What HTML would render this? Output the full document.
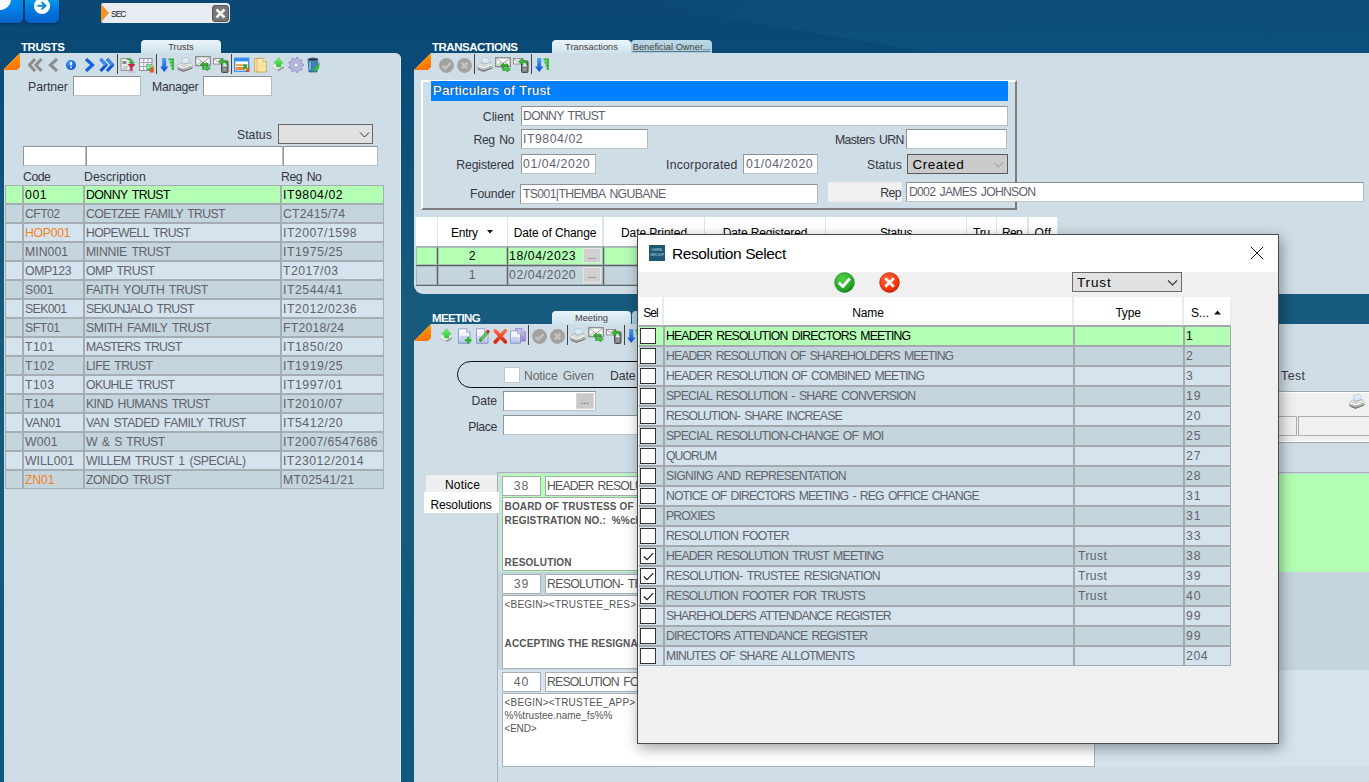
<!DOCTYPE html>
<html><head><meta charset="utf-8"><title>SEC</title>
<style>
*{box-sizing:border-box;margin:0;padding:0}
html,body{width:1369px;height:782px;overflow:hidden}
body{background:linear-gradient(to bottom,#0a4775 0,#0a4a76 55px,#11537a 190px,#165a7d 300px,#165a7c 540px,#0f587c 620px,#0e597d 782px);font-family:"Liberation Sans",sans-serif;font-size:12px;color:#3a3a3a;position:relative}
.a{position:absolute}
.lbl{position:absolute;white-space:nowrap;font-size:12px;color:#36363f;line-height:14px}
.r{text-align:right}
.inp{position:absolute;background:#fff;border:1px solid;border-color:#8b9196 #b4bbc0 #bcc3c8 #90969b;font-size:12px;color:#62626e;line-height:17px;padding-left:2px;white-space:nowrap;overflow:hidden}
.hdr{position:absolute;color:#fdfdfd;font-weight:bold;font-size:11.5px;line-height:12px;white-space:nowrap}
.tab{position:absolute;font-size:9.3px;color:#4a4038;text-align:center;line-height:13px;border-radius:4px 4px 0 0;background:linear-gradient(#e9f5fa,#cfe4ee);white-space:nowrap;overflow:hidden}
.tri{position:absolute;width:17px;height:17px;background:linear-gradient(160deg,#ffa800,#ff6a00);clip-path:polygon(100% 0,100% 82%,82% 100%,0 100%)}
.c{position:absolute;white-space:nowrap;overflow:hidden;font-size:12px;line-height:19px;padding-left:1px;color:#62626a}
.e{background:#c5d5de}.o{background:#d4e3ee}.s{background:#b3ffb3;color:#000}
.or{color:#f58220}
.sep{position:absolute;width:1px;background:#444}
.ic{position:absolute}
.btn{position:absolute;background:#d9d9d9;border:1px solid #b0b0b0;font-size:10px;color:#555;text-align:center;line-height:12px}
.cb{position:absolute;width:16px;height:16px;background:#fff;border:1px solid #333}
</style></head><body>
<!-- topbar -->
<div class="a" style="left:620px;top:0px;width:749px;height:53px;background:linear-gradient(to right,rgba(30,110,160,0),rgba(30,110,160,.16) 25%,rgba(30,110,160,.16));clip-path:polygon(0 0,100% 0,100% 100%,42% 100%)"></div>
<div class="a" style="left:-10px;top:-10px;width:33px;height:32.5px;border-radius:5px;background:linear-gradient(#0a96f0,#0082ea 55%,#0a62c6);box-shadow:0 1px 3px rgba(0,20,60,.45)"></div>
<div class="a" style="left:-10.7px;top:-11.7px;width:21.4px;height:21.4px;border-radius:50%;background:#fcfcfc"></div>
<div class="a" style="left:25px;top:-10px;width:34.3px;height:32.5px;border-radius:5px;background:linear-gradient(#00aee2,#0392e2 35%,#0078e0 60%,#0660c8);box-shadow:0 1px 3px rgba(0,20,60,.45)"></div>
<svg class="a" style="left:33px;top:-3.300px" width="18" height="18" viewBox="0 0 18 18"><circle cx="9" cy="9" r="8.050" fill="#fbfbfb"/><path d="M5.300 8.700h7M9.200 5.600l3.300 3.100-3.300 3.100" stroke="#0a86d2" stroke-width="1.900" fill="none" stroke-linecap="round" stroke-linejoin="round"/></svg>
<div class="a" style="left:101px;top:3px;width:129px;height:20px;background:#e6ecf2;border-radius:2px 4px 4px 2px"></div>
<svg class="a" style="left:101px;top:4px" width="8" height="18" viewBox="0 0 8 18"><path d="M0 0L8 9 0 18z" fill="#f7941d"/></svg>
<div class="a" style="left:111px;top:7px;line-height:12px;color:#222;white-space:nowrap"><span style="font-size:8.5px;letter-spacing:-1.003px;">SEC</span></div>
<svg class="a" style="left:212px;top:5px" width="17" height="17" viewBox="0 0 17 17"><rect x=".5" y=".5" width="16" height="16" rx="2.500" fill="#777" stroke="#555"/><path d="M4.500 4.500l8 8M12.500 4.500l-8 8" stroke="#f2f2f2" stroke-width="2.600"/></svg>
<!-- left panel -->
<div class="a" style="left:4px;top:53px;width:397px;height:740px;background:#cfdde6;border-radius:0 6px 0 0;box-shadow:inset -1px 0 0 #dde8ee"></div>
<svg width="0" height="0" style="position:absolute"><defs>
<linearGradient id="gBlue" x1="0" y1="0" x2="0" y2="1"><stop offset="0" stop-color="#4aa0ff"/><stop offset="1" stop-color="#0a4fd0"/></linearGradient>
<linearGradient id="gGreen" x1="0" y1="0" x2="0" y2="1"><stop offset="0" stop-color="#7be04a"/><stop offset="1" stop-color="#1f9a1f"/></linearGradient>
<radialGradient id="gOk" cx=".4" cy=".3" r=".8"><stop offset="0" stop-color="#58d048"/><stop offset=".7" stop-color="#22a428"/><stop offset="1" stop-color="#0b7a16"/></radialGradient>
<radialGradient id="gNo" cx=".4" cy=".3" r=".8"><stop offset="0" stop-color="#ff6238"/><stop offset=".7" stop-color="#f03408"/><stop offset="1" stop-color="#c01402"/></radialGradient>
<radialGradient id="gInfo" cx=".4" cy=".3" r=".8"><stop offset="0" stop-color="#4a9cff"/><stop offset="1" stop-color="#0746c4"/></radialGradient>
<linearGradient id="gGray" x1="0" y1="0" x2="0" y2="1"><stop offset="0" stop-color="#f4f4f4"/><stop offset="1" stop-color="#b8b8b8"/></linearGradient>
<linearGradient id="gPage" x1="0" y1="0" x2="0" y2="1"><stop offset="0" stop-color="#ffffff"/><stop offset=".45" stop-color="#eef1fb"/><stop offset="1" stop-color="#aebbe4"/></linearGradient>
<linearGradient id="gPurp" x1="0" y1="0" x2="0" y2="1"><stop offset="0" stop-color="#d4caee"/><stop offset="1" stop-color="#9686cf"/></linearGradient>
<linearGradient id="gRed" x1="0" y1="0" x2="0" y2="1"><stop offset="0" stop-color="#ff6a45"/><stop offset="1" stop-color="#d8240c"/></linearGradient>
<linearGradient id="gGreen2" x1="0" y1="0" x2="0" y2="1"><stop offset="0" stop-color="#7cf56c"/><stop offset="1" stop-color="#2fc030"/></linearGradient>
<linearGradient id="gPrn" x1="0" y1="0" x2="0" y2="1"><stop offset="0" stop-color="#f2f2f2"/><stop offset="1" stop-color="#9c9c9c"/></linearGradient>
</defs></svg>
<div class="a" style="left:3px;top:53px;width:17px;height:17px;background:#0a4a76;clip-path:polygon(0 0,100% 0,0 100%)"></div>
<div class="tri" style="left:3px;top:53px"></div>
<svg class="a" style="left:28px;top:58px" width="15" height="14" viewBox="0 0 15 14"><path d="M7 1L1.5 7 7 13M13.5 1L8 7l5.5 6" stroke="#8e8e8e" stroke-width="3.1" fill="none"/></svg>
<svg class="a" style="left:48px;top:58px" width="11" height="14" viewBox="0 0 11 14"><path d="M9 1L2.5 7 9 13" stroke="#8e8e8e" stroke-width="3.2" fill="none"/></svg>
<svg class="a" style="left:66px;top:60px" width="10" height="10" viewBox="0 0 10 10"><circle cx="5" cy="5" r="5" fill="url(#gInfo)"/><rect x="4.200" y="1.800" width="1.800" height="3.800" rx=".8" fill="#fff"/><rect x="4.200" y="6.400" width="1.800" height="1.800" rx=".8" fill="#fff"/></svg>
<svg class="a" style="left:84px;top:58px" width="11" height="14" viewBox="0 0 11 14"><path d="M2 1l6.5 6L2 13" stroke="#1762e0" stroke-width="3.2" fill="none"/></svg>
<svg class="a" style="left:99px;top:58px" width="15" height="14" viewBox="0 0 15 14"><path d="M1.5 1L7 7l-5.500 6M8 1l5.500 6L8 13" stroke="#0f55d8" stroke-width="3.100" fill="none"/><path d="M1.500 1L7 7M8 1l5.500 6" stroke="#3d8cf2" stroke-width="3.100" fill="none"/></svg>
<div class="sep" style="left:117px;top:54px;height:20px"></div>
<svg class="a" style="left:120px;top:57px" width="16" height="16" viewBox="0 0 16 16"><rect x="1" y="1.500" width="9" height="12" fill="#e9e9e9" stroke="#9a9a9a"/><rect x="2.500" y="4" width="4" height="3" fill="#8a8a8a"/><path d="M3 10h5M3 12h4" stroke="#aaa"/><path d="M7 1.500c4-.5 6 1 6 3.500h2l-3.200 3.500L8.600 5h2c0-1.500-1.200-2.300-3.600-2z" fill="#2fae2f"/><path d="M7.500 7h8l-3 3.500v3.500h-2v-3.500z" fill="#d4204a"/><path d="M8.500 15h6" stroke="#b9b9b9"/></svg>
<svg class="a" style="left:139px;top:57px" width="15" height="16" viewBox="0 0 15 16"><rect x=".5" y="1.500" width="12.500" height="12" fill="#f3f1fb" stroke="#8f8f9a"/><path d="M.5 5.500h12.500M.5 9.500h12.500M4.700 1.500v12M8.900 1.500v12" stroke="#a8a6b8"/><rect x="7.500" y="7" width="5.500" height="6" fill="#3aa83a"/><path d="M9 12V8h2.200a1.200 1.200 0 010 2.400H9" stroke="#dff5df" stroke-width="1" fill="none"/><path d="M14.800 8.500L10 15.500h4.800z" fill="#ee5a24"/></svg>
<div class="sep" style="left:156px;top:54px;height:20px"></div>
<svg class="a" style="left:160px;top:57px" width="15" height="16" viewBox="0 0 15 16"><path d="M2.200 1h4v8.500h2.300L4.200 15 0 9.500h2.200z" fill="url(#gBlue)"/><path d="M8.500 2.500h5.500M9.500 5.500h4.500M10.500 8.500h3.500M11.500 11.500h2.500" stroke="#2fb52f" stroke-width="2"/><path d="M13 2v11" stroke="#2fb52f" stroke-width="1.400"/></svg>
<svg class="a" style="left:177px;top:57px" width="16" height="16" viewBox="0 0 16 16"><path d="M4.300 1.200l6.200-.9 2.700 5.200-7 1.600z" fill="#d9ebfb" stroke="#a9bdd0" stroke-width=".6"/><path d="M.7 8.300l3.200-2.600 2.300 1.500 6.500-1.500 2.600 2v3.400l-8.800 3.300-5.800-2.300z" fill="url(#gPrn)" stroke="#8f8f8f" stroke-width=".5"/><path d="M.7 8.400l5.800 2.300 8.800-3" stroke="#fdfdfd" stroke-width="1.100" fill="none"/><path d="M.9 12l5.600 2.300 8.700-3.300" stroke="#6e6e6e" stroke-width="1" fill="none"/><circle cx="13" cy="9.600" r=".8" fill="#35c435"/></svg>
<svg class="a" style="left:195px;top:56px" width="16" height="16" viewBox="0 0 16 16"><rect x=".7" y=".7" width="14.600" height="9" fill="#f4f4f4" stroke="#858585" stroke-width="1.200"/><path d="M1 1l7 5.500L15 1M1 9.500l5-4M15 9.500l-5-4" stroke="#a2a2a2" stroke-width=".9" fill="none"/><path d="M8.500 6v1.500h4.500v2.200H8.500v1.500L5 8.600z" fill="#30b030" stroke="#1a7a1a" stroke-width=".5"/><path d="M12 9.700v1.500H7.500v2.200H12v1.500l3.500-2.600z" fill="#45cc45" stroke="#1a7a1a" stroke-width=".5"/></svg>
<svg class="a" style="left:213px;top:57px" width="16" height="16" viewBox="0 0 16 16"><rect x=".5" y="1.500" width="8" height="5.500" fill="#f6f6f6" stroke="#8a8a8a" stroke-width=".9"/><path d="M.7 1.700l3.800 3 3.800-3" stroke="#8a8a8a" stroke-width=".8" fill="none"/><rect x="8.500" y="4" width="6.500" height="11.500" rx="1" fill="#7c7c7c" stroke="#4a4a4a"/><rect x="9.700" y="5" width="4.200" height="4.500" fill="#cfe8e8"/><rect x="10.200" y="10.800" width="3.200" height="3.200" fill="#9a9a9a"/><path d="M5.500 5l4.500-4v2.200c3 0 4.300 1.800 4 5-1-2-2-2.600-4-2.600V8z" fill="#35b535" stroke="#1c7a1c" stroke-width=".4"/></svg>
<div class="sep" style="left:231px;top:54px;height:20px"></div>
<svg class="a" style="left:234px;top:57px" width="16" height="16" viewBox="0 0 16 16"><rect x=".7" y="1.200" width="14" height="13" fill="#fff" stroke="#2f8cf0" stroke-width="1.300"/><rect x=".7" y="1.200" width="14" height="3.200" fill="#2f8cf0"/><rect x="2" y="7" width="8" height="2" fill="#f4a64a"/><rect x="2" y="10" width="9" height="3" fill="#f08a2a"/><rect x="9.300" y="7.200" width="4" height="5" fill="#3aa83a"/><path d="M15.300 9L11 14.800h4.300z" fill="#ee4a24"/></svg>
<svg class="a" style="left:254px;top:57px" width="13" height="16" viewBox="0 0 13 16"><path d="M.7 1.500h8.500l3 3V15H.7z" fill="#fdf0b2" stroke="#c9a94a"/><path d="M9.200 1.500v3h3" fill="#fff8d8" stroke="#c9a94a" stroke-width=".8"/><path d="M3 1.500V15" stroke="#e88a6a" stroke-width=".8"/><path d="M4.500 6h6M4.500 8h6M4.500 10h6M4.500 12h6" stroke="#e2cf86" stroke-width=".8"/></svg>
<svg class="a" style="left:272px;top:57px" width="13" height="16" viewBox="0 0 13 16"><path d="M0 9.200L4 7.500h4.500l3.500 1.500-6 3.200z" fill="#f6f6f6"/><path d="M0 9.200l6 3v2.200l-6-3.200z" fill="#cfcfcf"/><path d="M6 12.200l6-3.200v2l-6 3.400z" fill="#9b9b9b"/><path d="M6.500.4l4.700 5.800H9V10H4.200V6.200H1.800z" fill="url(#gGreen2)" stroke="#3cc43c" stroke-width=".4"/></svg>
<svg class="a" style="left:288px;top:57px" width="16" height="16" viewBox="0 0 16 16"><polygon points="15.57,7.32 15.57,8.64 13.41,9.43 13.08,10.35 14.24,12.34 13.39,13.36 11.22,12.58 10.38,13.07 9.99,15.34 8.68,15.57 7.53,13.58 6.57,13.41 4.81,14.90 3.66,14.24 4.05,11.97 3.42,11.22 1.12,11.23 0.66,9.99 2.42,8.50 2.42,7.53 0.65,6.05 1.10,4.81 3.40,4.80 4.03,4.05 3.62,1.79 4.77,1.12 6.54,2.59 7.50,2.42 8.64,0.43 9.95,0.65 10.35,2.92 11.20,3.40 13.36,2.61 14.21,3.62 13.07,5.62 13.41,6.54" fill="#b9b8de" stroke="#8583bd" stroke-width=".7"/><circle cx="8" cy="8" r="2.300" fill="#f1f3fa" stroke="#8583bd" stroke-width=".7"/></svg>
<svg class="a" style="left:307px;top:57px" width="14" height="16" viewBox="0 0 14 16"><path d="M1 2.500h10l-1 12.500H2z" fill="#3d7fb8" stroke="#1d4a78" stroke-width=".6"/><ellipse cx="6" cy="2.500" rx="5.200" ry="1.700" fill="#23303c" stroke="#7aa3c6" stroke-width=".7"/><path d="M3 5v8" stroke="#8fc0e8" stroke-width="1.500"/><path d="M5.500 9.500l2 2.500 5.500-7-1 6.500-4 3.500z" fill="#2fc02f"/></svg>
<div class="hdr" style="left:21px;top:41px"><span style="letter-spacing:-0.44px">TRUSTS</span></div>
<div class="tab" style="left:141px;top:40px;width:80px;height:13px;line-height:15px">Trusts</div>
<div class="lbl" style="left:28px;top:80px"><span style="font-size:12.25px;letter-spacing:-0.045px;">Partner</span></div>
<div class="inp" style="left:73px;top:76px;width:68px;height:20px"></div>
<div class="lbl" style="left:152px;top:80px"><span style="font-size:12.25px;letter-spacing:-0.275px;">Manager</span></div>
<div class="inp" style="left:203px;top:76px;width:69px;height:20px"></div>
<div class="lbl" style="left:237px;top:128px"><span style="font-size:12.25px;letter-spacing:0.014px;">Status</span></div>
<div class="a" style="left:278px;top:124px;width:95px;height:20px;background:#e1e1e1;border:1px solid #666"></div>
<svg class="a" style="left:358.500px;top:130.500px" width="11" height="8" viewBox="0 0 11 8"><path d="M1 1.500l4.500 4.500 4.500-4.500" stroke="#333" stroke-width="1" fill="none"/></svg>
<div class="inp" style="left:23px;top:146px;width:63px;height:20px"></div>
<div class="inp" style="left:86px;top:146px;width:197px;height:20px"></div>
<div class="inp" style="left:283px;top:146px;width:95px;height:20px"></div>
<div class="lbl" style="left:23px;top:170px"><span style="font-size:12.25px;letter-spacing:-0.462px;">Code</span></div>
<div class="lbl" style="left:84px;top:170px"><span style="font-size:12.25px;letter-spacing:0.043px;">Description</span></div>
<div class="lbl" style="left:281px;top:170px"><span style="font-size:12.25px;letter-spacing:-0.467px;word-spacing:1.7px;">Reg No</span></div>
<div class="a" style="left:5px;top:185px;width:379px;height:304px;background:#a5adb3"></div>
<div class="c s" style="left:6px;top:186px;width:16px;height:17px"></div>
<div class="c s" style="left:24px;top:186px;width:59px;height:17px"><span style="font-size:12.25px;letter-spacing:0.581px;">001</span></div>
<div class="c s" style="left:85px;top:186px;width:195px;height:17px"><span style="font-size:12.25px;letter-spacing:-0.532px;word-spacing:1.7px;">DONNY TRUST</span></div>
<div class="c s" style="left:282px;top:186px;width:101px;height:17px"><span style="font-size:12.25px;letter-spacing:0.554px;">IT9804/02</span></div>
<div class="c e" style="left:6px;top:205px;width:16px;height:17px"></div>
<div class="c e" style="left:24px;top:205px;width:59px;height:17px"><span style="font-size:12.25px;letter-spacing:-0.584px;">CFT02</span></div>
<div class="c e" style="left:85px;top:205px;width:195px;height:17px"><span style="font-size:12.25px;letter-spacing:-0.606px;word-spacing:1.7px;">COETZEE FAMILY TRUST</span></div>
<div class="c e" style="left:282px;top:205px;width:101px;height:17px"><span style="font-size:12.25px;letter-spacing:0.186px;">CT2415/74</span></div>
<div class="c o" style="left:6px;top:224px;width:16px;height:17px"></div>
<div class="c o or" style="left:24px;top:224px;width:59px;height:17px"><span style="font-size:12.25px;letter-spacing:-0.277px;">HOP001</span></div>
<div class="c o" style="left:85px;top:224px;width:195px;height:17px"><span style="font-size:12.25px;letter-spacing:-0.653px;word-spacing:1.7px;">HOPEWELL TRUST</span></div>
<div class="c o" style="left:282px;top:224px;width:101px;height:17px"><span style="font-size:12.25px;letter-spacing:0.481px;">IT2007/1598</span></div>
<div class="c e" style="left:6px;top:243px;width:16px;height:17px"></div>
<div class="c e" style="left:24px;top:243px;width:59px;height:17px"><span style="font-size:12.25px;letter-spacing:0.041px;">MIN001</span></div>
<div class="c e" style="left:85px;top:243px;width:195px;height:17px"><span style="font-size:12.25px;letter-spacing:-0.334px;word-spacing:1.7px;">MINNIE TRUST</span></div>
<div class="c e" style="left:282px;top:243px;width:101px;height:17px"><span style="font-size:12.25px;letter-spacing:0.554px;">IT1975/25</span></div>
<div class="c o" style="left:6px;top:262px;width:16px;height:17px"></div>
<div class="c o" style="left:24px;top:262px;width:59px;height:17px"><span style="font-size:12.25px;letter-spacing:-0.348px;">OMP123</span></div>
<div class="c o" style="left:85px;top:262px;width:195px;height:17px"><span style="font-size:12.25px;letter-spacing:-0.54px;word-spacing:1.7px;">OMP TRUST</span></div>
<div class="c o" style="left:282px;top:262px;width:101px;height:17px"><span style="font-size:12.25px;letter-spacing:0.477px;">T2017/03</span></div>
<div class="c e" style="left:6px;top:281px;width:16px;height:17px"></div>
<div class="c e" style="left:24px;top:281px;width:59px;height:17px"><span style="font-size:12.25px;letter-spacing:-0.003px;">S001</span></div>
<div class="c e" style="left:85px;top:281px;width:195px;height:17px"><span style="font-size:12.25px;letter-spacing:-0.373px;word-spacing:1.7px;">FAITH YOUTH TRUST</span></div>
<div class="c e" style="left:282px;top:281px;width:101px;height:17px"><span style="font-size:12.25px;letter-spacing:0.554px;">IT2544/41</span></div>
<div class="c o" style="left:6px;top:300px;width:16px;height:17px"></div>
<div class="c o" style="left:24px;top:300px;width:59px;height:17px"><span style="font-size:12.25px;letter-spacing:-0.57px;">SEK001</span></div>
<div class="c o" style="left:85px;top:300px;width:195px;height:17px"><span style="font-size:12.25px;letter-spacing:-0.724px;word-spacing:1.7px;">SEKUNJALO TRUST</span></div>
<div class="c o" style="left:282px;top:300px;width:101px;height:17px"><span style="font-size:12.25px;letter-spacing:0.481px;">IT2012/0236</span></div>
<div class="c e" style="left:6px;top:319px;width:16px;height:17px"></div>
<div class="c e" style="left:24px;top:319px;width:59px;height:17px"><span style="font-size:12.25px;letter-spacing:-0.415px;">SFT01</span></div>
<div class="c e" style="left:85px;top:319px;width:195px;height:17px"><span style="font-size:12.25px;letter-spacing:-0.357px;word-spacing:1.7px;">SMITH FAMILY TRUST</span></div>
<div class="c e" style="left:282px;top:319px;width:101px;height:17px"><span style="font-size:12.25px;letter-spacing:0.232px;">FT2018/24</span></div>
<div class="c o" style="left:6px;top:338px;width:16px;height:17px"></div>
<div class="c o" style="left:24px;top:338px;width:59px;height:17px"><span style="font-size:12.25px;letter-spacing:0.393px;">T101</span></div>
<div class="c o" style="left:85px;top:338px;width:195px;height:17px"><span style="font-size:12.25px;letter-spacing:-0.731px;word-spacing:1.7px;">MASTERS TRUST</span></div>
<div class="c o" style="left:282px;top:338px;width:101px;height:17px"><span style="font-size:12.25px;letter-spacing:0.554px;">IT1850/20</span></div>
<div class="c e" style="left:6px;top:357px;width:16px;height:17px"></div>
<div class="c e" style="left:24px;top:357px;width:59px;height:17px"><span style="font-size:12.25px;letter-spacing:0.393px;">T102</span></div>
<div class="c e" style="left:85px;top:357px;width:195px;height:17px"><span style="font-size:12.25px;letter-spacing:-0.506px;word-spacing:1.7px;">LIFE TRUST</span></div>
<div class="c e" style="left:282px;top:357px;width:101px;height:17px"><span style="font-size:12.25px;letter-spacing:0.554px;">IT1919/25</span></div>
<div class="c o" style="left:6px;top:376px;width:16px;height:17px"></div>
<div class="c o" style="left:24px;top:376px;width:59px;height:17px"><span style="font-size:12.25px;letter-spacing:0.393px;">T103</span></div>
<div class="c o" style="left:85px;top:376px;width:195px;height:17px"><span style="font-size:12.25px;letter-spacing:-0.644px;word-spacing:1.7px;">OKUHLE TRUST</span></div>
<div class="c o" style="left:282px;top:376px;width:101px;height:17px"><span style="font-size:12.25px;letter-spacing:0.554px;">IT1997/01</span></div>
<div class="c e" style="left:6px;top:395px;width:16px;height:17px"></div>
<div class="c e" style="left:24px;top:395px;width:59px;height:17px"><span style="font-size:12.25px;letter-spacing:0.393px;">T104</span></div>
<div class="c e" style="left:85px;top:395px;width:195px;height:17px"><span style="font-size:12.25px;letter-spacing:-0.557px;word-spacing:1.7px;">KIND HUMANS TRUST</span></div>
<div class="c e" style="left:282px;top:395px;width:101px;height:17px"><span style="font-size:12.25px;letter-spacing:0.554px;">IT2010/07</span></div>
<div class="c o" style="left:6px;top:414px;width:16px;height:17px"></div>
<div class="c o" style="left:24px;top:414px;width:59px;height:17px"><span style="font-size:12.25px;letter-spacing:-0.326px;">VAN01</span></div>
<div class="c o" style="left:85px;top:414px;width:195px;height:17px"><span style="font-size:12.25px;letter-spacing:-0.494px;word-spacing:1.7px;">VAN STADED FAMILY TRUST</span></div>
<div class="c o" style="left:282px;top:414px;width:101px;height:17px"><span style="font-size:12.25px;letter-spacing:0.554px;">IT5412/20</span></div>
<div class="c e" style="left:6px;top:433px;width:16px;height:17px"></div>
<div class="c e" style="left:24px;top:433px;width:59px;height:17px"><span style="font-size:12.25px;letter-spacing:0.2px;">W001</span></div>
<div class="c e" style="left:85px;top:433px;width:195px;height:17px"><span style="font-size:12.25px;letter-spacing:-0.453px;word-spacing:1.7px;">W &amp; S TRUST</span></div>
<div class="c e" style="left:282px;top:433px;width:101px;height:17px"><span style="font-size:12.25px;letter-spacing:0.413px;">IT2007/6547686</span></div>
<div class="c o" style="left:6px;top:452px;width:16px;height:17px"></div>
<div class="c o" style="left:24px;top:452px;width:59px;height:17px"><span style="font-size:12.25px;letter-spacing:0.012px;">WILL001</span></div>
<div class="c o" style="left:85px;top:452px;width:195px;height:17px"><span style="font-size:12.25px;letter-spacing:-0.406px;word-spacing:1.7px;">WILLEM TRUST 1 (SPECIAL)</span></div>
<div class="c o" style="left:282px;top:452px;width:101px;height:17px"><span style="font-size:12.25px;letter-spacing:0.454px;">IT23012/2014</span></div>
<div class="c e" style="left:6px;top:471px;width:16px;height:17px"></div>
<div class="c e or" style="left:24px;top:471px;width:59px;height:17px"><span style="font-size:12.25px;letter-spacing:-0.118px;">ZN01</span></div>
<div class="c e" style="left:85px;top:471px;width:195px;height:17px"><span style="font-size:12.25px;letter-spacing:-0.452px;word-spacing:1.7px;">ZONDO TRUST</span></div>
<div class="c e" style="left:282px;top:471px;width:101px;height:17px"><span style="font-size:12.25px;letter-spacing:0.258px;">MT02541/21</span></div>
<!-- transactions -->
<div class="a" style="left:414px;top:53px;width:961px;height:241px;background:#cfdde6;border-radius:0 0 0 9px"></div>
<div class="a" style="left:414px;top:53px;width:17px;height:17px;background:#0a4a76;clip-path:polygon(0 0,100% 0,0 100%)"></div>
<div class="tri" style="left:414px;top:53px"></div>
<div class="hdr" style="left:432px;top:41px"><span style="letter-spacing:-0.487px">TRANSACTIONS</span></div>
<div class="tab" style="left:552px;top:40px;width:79px;height:13px;line-height:15px">Transactions</div>
<div class="tab" style="left:631px;top:40px;width:81px;height:13px;line-height:15px;background:linear-gradient(#bcd9e8,#a9cbdd);text-decoration:underline;text-decoration-color:#5a7a8a">Beneficial Owner...</div>
<svg class="a" style="left:439px;top:58px" width="15" height="15" viewBox="0 0 14 14"><circle cx="7" cy="7" r="6.900" fill="#a2a2a2"/><path d="M3.300 7.300l2.600 2.500 4.800-5" stroke="#c2c2c2" stroke-width="2.200" fill="none"/></svg>
<svg class="a" style="left:457px;top:58px" width="15" height="15" viewBox="0 0 14 14"><circle cx="7" cy="7" r="6.900" fill="#a2a2a2"/><path d="M4.300 4.300l5.400 5.400M9.700 4.300l-5.400 5.400" stroke="#c2c2c2" stroke-width="2.400" fill="none"/></svg>
<div class="sep" style="left:474px;top:54px;height:20px"></div>
<svg class="a" style="left:477px;top:57px" width="16" height="16" viewBox="0 0 16 16"><path d="M4.300 1.200l6.200-.9 2.700 5.200-7 1.600z" fill="#d9ebfb" stroke="#a9bdd0" stroke-width=".6"/><path d="M.7 8.300l3.200-2.600 2.300 1.500 6.500-1.500 2.600 2v3.400l-8.800 3.300-5.800-2.300z" fill="url(#gPrn)" stroke="#8f8f8f" stroke-width=".5"/><path d="M.7 8.400l5.800 2.300 8.800-3" stroke="#fdfdfd" stroke-width="1.100" fill="none"/><path d="M.9 12l5.600 2.300 8.700-3.300" stroke="#6e6e6e" stroke-width="1" fill="none"/><circle cx="13" cy="9.600" r=".8" fill="#35c435"/></svg>
<svg class="a" style="left:495px;top:57px" width="16" height="16" viewBox="0 0 16 16"><rect x=".7" y=".7" width="14.600" height="9" fill="#f4f4f4" stroke="#858585" stroke-width="1.200"/><path d="M1 1l7 5.500L15 1M1 9.500l5-4M15 9.500l-5-4" stroke="#a2a2a2" stroke-width=".9" fill="none"/><path d="M8.500 6v1.500h4.500v2.200H8.500v1.500L5 8.600z" fill="#30b030" stroke="#1a7a1a" stroke-width=".5"/><path d="M12 9.700v1.500H7.500v2.200H12v1.500l3.500-2.600z" fill="#45cc45" stroke="#1a7a1a" stroke-width=".5"/></svg>
<svg class="a" style="left:513px;top:57px" width="16" height="16" viewBox="0 0 16 16"><rect x=".5" y="1.500" width="8" height="5.500" fill="#f6f6f6" stroke="#8a8a8a" stroke-width=".9"/><path d="M.7 1.700l3.800 3 3.800-3" stroke="#8a8a8a" stroke-width=".8" fill="none"/><rect x="8.500" y="4" width="6.500" height="11.500" rx="1" fill="#7c7c7c" stroke="#4a4a4a"/><rect x="9.700" y="5" width="4.200" height="4.500" fill="#cfe8e8"/><rect x="10.200" y="10.800" width="3.200" height="3.200" fill="#9a9a9a"/><path d="M5.500 5l4.500-4v2.200c3 0 4.300 1.800 4 5-1-2-2-2.600-4-2.600V8z" fill="#35b535" stroke="#1c7a1c" stroke-width=".4"/></svg>
<div class="sep" style="left:531px;top:54px;height:20px"></div>
<svg class="a" style="left:535px;top:57px" width="15" height="16" viewBox="0 0 15 16"><path d="M2.200 1h4v8.500h2.300L4.200 15 0 9.500h2.200z" fill="url(#gBlue)"/><path d="M8.500 2.500h5.500M9.500 5.500h4.500M10.500 8.500h3.500M11.500 11.500h2.500" stroke="#2fb52f" stroke-width="2"/><path d="M13 2v11" stroke="#2fb52f" stroke-width="1.400"/></svg>
<div class="a" style="left:421px;top:80px;width:596px;height:130px;border:2px solid;border-color:#fff #7e7e7e #7e7e7e #fff;background:#cfdde6"></div>
<div class="a" style="left:431px;top:81px;width:577px;height:20px;background:#0080ff"></div>
<div class="a" style="left:433px;top:83px;color:#fff;line-height:16px;white-space:nowrap;text-shadow:-1px -1px 0 #6a6a6a"><span style="font-size:13px;letter-spacing:0.466px;">Particulars of Trust</span></div>
<div class="lbl r" style="left:394px;width:120px;top:110px"><span style="font-size:12.25px;letter-spacing:-0.024px;">Client</span></div>
<div class="inp" style="left:521px;top:106px;width:487px;height:20px;line-height:18px;padding-left:1px;"><span style="font-size:12.25px;letter-spacing:-0.713px;word-spacing:1.7px;">DONNY TRUST</span></div>
<div class="lbl r" style="left:394px;width:120px;top:133px"><span style="font-size:12.25px;letter-spacing:-0.467px;word-spacing:1.7px;">Reg No</span></div>
<div class="inp" style="left:521px;top:129px;width:127px;height:20px;line-height:18px;padding-left:1px;"><span style="font-size:12.25px;letter-spacing:0.554px;">IT9804/02</span></div>
<div class="lbl" style="left:835px;top:133px"><span style="font-size:12.25px;letter-spacing:-0.591px;word-spacing:1.7px;">Masters URN</span></div>
<div class="inp" style="left:906px;top:129px;width:101px;height:20px;line-height:18px;"></div>
<div class="lbl r" style="left:394px;width:120px;top:158px"><span style="font-size:12.25px;letter-spacing:-0.16px;">Registered</span></div>
<div class="inp" style="left:521px;top:154px;width:75px;height:20px;line-height:18px;padding-left:1px;"><span style="font-size:12.25px;letter-spacing:0.588px;">01/04/2020</span></div>
<div class="lbl" style="left:666px;top:158px"><span style="font-size:12.25px;letter-spacing:0.238px;">Incorporated</span></div>
<div class="inp" style="left:743px;top:154px;width:75px;height:20px;line-height:18px;"><span style="font-size:12.25px;letter-spacing:0.588px;">01/04/2020</span></div>
<div class="lbl" style="left:867px;top:158px"><span style="font-size:12.25px;letter-spacing:0.014px;">Status</span></div>
<div class="a" style="left:907px;top:154px;width:101px;height:20px;background:#cbcbcb;border:1px solid #5a5a5a"></div>
<div class="a" style="left:912.5px;top:157px;color:#000;line-height:16px;white-space:nowrap"><span style="font-size:13.5px;letter-spacing:0.521px;">Created</span></div>
<svg class="a" style="left:993px;top:161px" width="11" height="8" viewBox="0 0 11 8"><path d="M1 1.500l4.500 4.500 4.500-4.500" stroke="#a9a9a9" stroke-width="1.100" fill="none"/></svg>
<div class="lbl r" style="left:395px;width:120px;top:187px"><span style="font-size:12.25px;letter-spacing:-0.088px;">Founder</span></div>
<div class="inp" style="left:520px;top:184px;width:298px;height:20px;line-height:18px;"><span style="font-size:12.25px;letter-spacing:-0.644px;word-spacing:1.7px;">TS001|THEMBA NGUBANE</span></div>
<div class="a" style="left:828px;top:182px;width:74px;height:20px;background:#f0f0f0"></div>
<div class="lbl r" style="left:781px;width:120px;top:186px"><span style="font-size:12.25px;letter-spacing:-0.536px;">Rep</span></div>
<div class="inp" style="left:906px;top:182px;width:458px;height:20px;line-height:18px;"><span style="font-size:12.25px;letter-spacing:-0.772px;word-spacing:1.7px;">D002 JAMES JOHNSON</span></div>
<div class="a" style="left:415px;top:217px;width:643px;height:29px;background:#dbe6ee"></div>
<div class="a" style="left:416px;top:217px;width:21px;height:29px;background:#fff;color:#000;text-align:center;line-height:33px;white-space:nowrap"></div>
<div class="a" style="left:438px;top:217px;width:69px;height:29px;background:#fff;color:#000;text-align:center;line-height:33px;white-space:nowrap"></div>
<div class="a" style="left:508px;top:217px;width:94px;height:29px;background:#fff;color:#000;text-align:center;line-height:33px;white-space:nowrap"><span style="font-size:12px;letter-spacing:-0.105px;">Date of Change</span></div>
<div class="a" style="left:604px;top:217px;width:100px;height:29px;background:#fff;color:#000;text-align:center;line-height:33px;white-space:nowrap"><span style="font-size:12px;letter-spacing:-0.05px;">Date Printed</span></div>
<div class="a" style="left:705px;top:217px;width:120px;height:29px;background:#fff;color:#000;text-align:center;line-height:33px;white-space:nowrap"><span style="font-size:12px;letter-spacing:-0.156px;">Date Registered</span></div>
<div class="a" style="left:826px;top:217px;width:140px;height:29px;background:#fff;color:#000;text-align:center;line-height:33px;white-space:nowrap"><span style="font-size:12px;letter-spacing:-0.305px;">Status</span></div>
<div class="a" style="left:967px;top:217px;width:29px;height:29px;background:#fff;color:#000;text-align:center;line-height:33px;white-space:nowrap"><span style="font-size:12px;letter-spacing:-0.149px;">Tru</span></div>
<div class="a" style="left:997px;top:217px;width:30px;height:29px;background:#fff;color:#000;text-align:center;line-height:33px;white-space:nowrap"><span style="font-size:12px;letter-spacing:-0.753px;">Rep</span></div>
<div class="a" style="left:1029px;top:217px;width:28px;height:29px;background:#fff;color:#000;text-align:center;line-height:33px;white-space:nowrap"><span style="font-size:12px;letter-spacing:0.387px;">Off</span></div>
<div class="a" style="left:451px;top:217px;color:#000;line-height:33px"><span style="font-size:12px;letter-spacing:-0.273px;">Entry</span></div>
<svg class="a" style="left:486.600px;top:230px" width="6" height="4" viewBox="0 0 6 4"><path d="M0 0h6L3 3.600z" fill="#111"/></svg>
<div class="a" style="left:416px;top:246px;width:642px;height:40px;background:#5f6569;border-top:1px solid #a9b0b5"></div>
<div class="c s" style="left:416px;top:247px;width:21px;height:18px;line-height:18px;box-shadow:inset 0 0 0 1px rgba(150,160,168,.6);"></div>
<div class="c s" style="left:438px;top:247px;width:69px;height:18px;line-height:18px;box-shadow:inset 0 0 0 1px rgba(150,160,168,.6);text-align:center;padding-left:0;"><span style="font-size:12.25px;letter-spacing:0.787px;">2</span></div>
<div class="c s" style="left:508px;top:247px;width:95px;height:18px;line-height:18px;box-shadow:inset 0 0 0 1px rgba(150,160,168,.6);"><span style="font-size:12.25px;letter-spacing:0.588px;">18/04/2023</span></div>
<div class="c s" style="left:604px;top:247px;width:100px;height:18px;line-height:18px;box-shadow:inset 0 0 0 1px rgba(150,160,168,.6);"></div>
<div class="c s" style="left:705px;top:247px;width:120px;height:18px;line-height:18px;box-shadow:inset 0 0 0 1px rgba(150,160,168,.6);"></div>
<div class="c s" style="left:826px;top:247px;width:141px;height:18px;line-height:18px;box-shadow:inset 0 0 0 1px rgba(150,160,168,.6);"></div>
<div class="c s" style="left:968px;top:247px;width:28px;height:18px;line-height:18px;box-shadow:inset 0 0 0 1px rgba(150,160,168,.6);"></div>
<div class="c s" style="left:997px;top:247px;width:31px;height:18px;line-height:18px;box-shadow:inset 0 0 0 1px rgba(150,160,168,.6);"></div>
<div class="c s" style="left:1029px;top:247px;width:28px;height:18px;line-height:18px;box-shadow:inset 0 0 0 1px rgba(150,160,168,.6);"></div>
<div class="btn" style="left:583px;top:248px;width:18px;height:15px;background:#d0d0d0;border-color:#e6e6e6;line-height:14px">...</div>
<div class="c e" style="left:416px;top:266px;width:21px;height:19px;line-height:19px;box-shadow:inset 0 0 0 1px rgba(150,160,168,.6);"></div>
<div class="c e" style="left:438px;top:266px;width:69px;height:19px;line-height:19px;box-shadow:inset 0 0 0 1px rgba(150,160,168,.6);text-align:center;padding-left:0;"><span style="font-size:12.25px;letter-spacing:0.787px;">1</span></div>
<div class="c e" style="left:508px;top:266px;width:95px;height:19px;line-height:19px;box-shadow:inset 0 0 0 1px rgba(150,160,168,.6);"><span style="font-size:12.25px;letter-spacing:0.588px;">02/04/2020</span></div>
<div class="c e" style="left:604px;top:266px;width:100px;height:19px;line-height:19px;box-shadow:inset 0 0 0 1px rgba(150,160,168,.6);"></div>
<div class="c e" style="left:705px;top:266px;width:120px;height:19px;line-height:19px;box-shadow:inset 0 0 0 1px rgba(150,160,168,.6);"></div>
<div class="c e" style="left:826px;top:266px;width:141px;height:19px;line-height:19px;box-shadow:inset 0 0 0 1px rgba(150,160,168,.6);"></div>
<div class="c e" style="left:968px;top:266px;width:28px;height:19px;line-height:19px;box-shadow:inset 0 0 0 1px rgba(150,160,168,.6);"></div>
<div class="c e" style="left:997px;top:266px;width:31px;height:19px;line-height:19px;box-shadow:inset 0 0 0 1px rgba(150,160,168,.6);"></div>
<div class="c e" style="left:1029px;top:266px;width:28px;height:19px;line-height:19px;box-shadow:inset 0 0 0 1px rgba(150,160,168,.6);"></div>
<div class="btn" style="left:583px;top:267px;width:18px;height:16px;background:#d0d0d0;border-color:#e6e6e6;line-height:14px">...</div>
<!-- meeting -->
<div class="a" style="left:414px;top:324px;width:961px;height:470px;background:#cfdde6"></div>
<div class="a" style="left:414px;top:324px;width:17px;height:17px;background:#165a7d;clip-path:polygon(0 0,100% 0,0 100%)"></div>
<div class="tri" style="left:414px;top:324px"></div>
<div class="hdr" style="left:432px;top:312px"><span style="letter-spacing:-0.632px">MEETING</span></div>
<div class="tab" style="left:552px;top:311px;width:79px;height:13px;line-height:15px">Meeting</div>
<div class="tab" style="left:632px;top:311px;width:79px;height:13px;line-height:15px;background:linear-gradient(#bcd9e8,#a9cbdd)"></div>
<svg class="a" style="left:440px;top:328px" width="13" height="16" viewBox="0 0 13 16"><path d="M0 9.200L4 7.500h4.500l3.500 1.500-6 3.200z" fill="#f6f6f6"/><path d="M0 9.200l6 3v2.200l-6-3.200z" fill="#cfcfcf"/><path d="M6 12.200l6-3.200v2l-6 3.400z" fill="#9b9b9b"/><path d="M6.500.4l4.700 5.800H9V10H4.200V6.200H1.800z" fill="url(#gGreen2)" stroke="#3cc43c" stroke-width=".4"/></svg>
<svg class="a" style="left:458px;top:328px" width="15" height="16" viewBox="0 0 15 16"><path d="M.5.800h8l3.500 3.500V15.300H.5z" fill="url(#gPage)" stroke="#8796c8" stroke-width=".9"/><path d="M8.500.800v3.500H12" fill="#dfe6f8" stroke="#8796c8" stroke-width=".7"/><rect x="2" y="8" width="8.500" height="4.500" fill="#c3cdee" opacity=".8"/><path d="M10.200 10v4.400M8 12.200h4.400" stroke="#2db52d" stroke-width="2.500" stroke-linecap="round"/></svg>
<svg class="a" style="left:476px;top:328px" width="15" height="16" viewBox="0 0 15 16"><path d="M.5.800h8l3.500 3.500V15.300H.5z" fill="url(#gPage)" stroke="#8796c8" stroke-width=".9"/><path d="M8.500.800v3.500H12" fill="#dfe6f8" stroke="#8796c8" stroke-width=".7"/><rect x="2" y="8" width="8.500" height="4.500" fill="#c3cdee" opacity=".8"/><path d="M4.600 12l7-8" stroke="#2a8a2a" stroke-width="3.100" stroke-linecap="round"/><path d="M4.800 11.800l6.800-7.800" stroke="#66d455" stroke-width="1.900" stroke-linecap="round"/><path d="M3.800 13l.5-1.600 1 .9z" fill="#333"/><circle cx="12" cy="3.500" r="1.700" fill="#e0301c"/></svg>
<svg class="a" style="left:493px;top:328px" width="15" height="16" viewBox="0 0 15 16"><path d="M2.300 2.800l10 11M12.300 2.600l-10 11.400" stroke="url(#gRed)" stroke-width="3.600" stroke-linecap="round" fill="none"/></svg>
<svg class="a" style="left:510px;top:328px" width="16" height="16" viewBox="0 0 16 16"><path d="M5.500.6h6.500l3.300 3.300V13H5.500z" fill="url(#gPurp)" stroke="#8a7cc4" stroke-width=".8"/><path d="M12 .6v3.300h3.300" fill="#e4def4" stroke="#8a7cc4" stroke-width=".6"/><path d="M.6 2.800h7l3 3V15.300H.6z" fill="url(#gPage)" stroke="#8796c8" stroke-width=".9"/><path d="M7.600 2.800v3h3" fill="#dfe6f8" stroke="#8796c8" stroke-width=".7"/><rect x="2" y="9" width="7" height="4.200" fill="#c3cdee" opacity=".8"/></svg>
<div class="sep" style="left:528px;top:325px;height:20px"></div>
<svg class="a" style="left:532px;top:329px" width="15" height="15" viewBox="0 0 14 14"><circle cx="7" cy="7" r="6.900" fill="#a2a2a2"/><path d="M3.300 7.300l2.600 2.500 4.800-5" stroke="#c2c2c2" stroke-width="2.200" fill="none"/></svg>
<svg class="a" style="left:550px;top:329px" width="15" height="15" viewBox="0 0 14 14"><circle cx="7" cy="7" r="6.900" fill="#a2a2a2"/><path d="M4.300 4.300l5.400 5.400M9.700 4.300l-5.400 5.400" stroke="#c2c2c2" stroke-width="2.400" fill="none"/></svg>
<div class="sep" style="left:567px;top:325px;height:20px"></div>
<svg class="a" style="left:570px;top:328px" width="16" height="16" viewBox="0 0 16 16"><path d="M4.300 1.200l6.200-.9 2.700 5.200-7 1.600z" fill="#d9ebfb" stroke="#a9bdd0" stroke-width=".6"/><path d="M.7 8.300l3.200-2.600 2.300 1.500 6.500-1.500 2.600 2v3.400l-8.800 3.300-5.800-2.300z" fill="url(#gPrn)" stroke="#8f8f8f" stroke-width=".5"/><path d="M.7 8.400l5.800 2.300 8.800-3" stroke="#fdfdfd" stroke-width="1.100" fill="none"/><path d="M.9 12l5.600 2.300 8.700-3.300" stroke="#6e6e6e" stroke-width="1" fill="none"/><circle cx="13" cy="9.600" r=".8" fill="#35c435"/></svg>
<svg class="a" style="left:588px;top:327px" width="16" height="16" viewBox="0 0 16 16"><rect x=".7" y=".7" width="14.600" height="9" fill="#f4f4f4" stroke="#858585" stroke-width="1.200"/><path d="M1 1l7 5.500L15 1M1 9.500l5-4M15 9.500l-5-4" stroke="#a2a2a2" stroke-width=".9" fill="none"/><path d="M8.500 6v1.500h4.500v2.200H8.500v1.500L5 8.600z" fill="#30b030" stroke="#1a7a1a" stroke-width=".5"/><path d="M12 9.700v1.500H7.500v2.200H12v1.500l3.500-2.600z" fill="#45cc45" stroke="#1a7a1a" stroke-width=".5"/></svg>
<svg class="a" style="left:606px;top:328px" width="16" height="16" viewBox="0 0 16 16"><rect x=".5" y="1.500" width="8" height="5.500" fill="#f6f6f6" stroke="#8a8a8a" stroke-width=".9"/><path d="M.7 1.700l3.800 3 3.800-3" stroke="#8a8a8a" stroke-width=".8" fill="none"/><rect x="8.500" y="4" width="6.500" height="11.500" rx="1" fill="#7c7c7c" stroke="#4a4a4a"/><rect x="9.700" y="5" width="4.200" height="4.500" fill="#cfe8e8"/><rect x="10.200" y="10.800" width="3.200" height="3.200" fill="#9a9a9a"/><path d="M5.500 5l4.500-4v2.200c3 0 4.300 1.800 4 5-1-2-2-2.600-4-2.600V8z" fill="#35b535" stroke="#1c7a1c" stroke-width=".4"/></svg>
<div class="sep" style="left:624px;top:325px;height:20px"></div>
<svg class="a" style="left:627px;top:328px" width="15" height="16" viewBox="0 0 15 16"><path d="M2.200 1h4v8.500h2.300L4.200 15 0 9.500h2.200z" fill="url(#gBlue)"/><path d="M8.500 2.500h5.500M9.500 5.500h4.500M10.500 8.500h3.500M11.500 11.500h2.500" stroke="#2fb52f" stroke-width="2"/><path d="M13 2v11" stroke="#2fb52f" stroke-width="1.400"/></svg>
<div class="a" style="left:457px;top:361px;width:800px;height:27px;border:1.5px solid #111;border-radius:14px;background:transparent"></div>
<div class="a" style="left:504px;top:367px;width:16px;height:16px;background:#fff;border:1px solid #c4c8cc"></div>
<div class="a" style="left:524px;top:368px;color:#6a6a6a;line-height:16px;white-space:nowrap"><span style="font-size:12.25px;letter-spacing:-0.166px;word-spacing:1.7px;">Notice Given</span></div>
<div class="lbl" style="left:610px;top:369px"><span style="font-size:12.25px;letter-spacing:-0.125px;">Date</span></div>
<div class="lbl" style="left:1281px;top:369px"><span style="font-size:12.25px;letter-spacing:0.511px;">Test</span></div>
<div class="lbl r" style="left:377px;width:120px;top:394px"><span style="font-size:12.25px;letter-spacing:-0.125px;">Date</span></div>
<div class="inp" style="left:503px;top:391px;width:93px;height:20px;line-height:18px;"></div>
<div class="btn" style="left:576px;top:393px;width:18px;height:16px;background:#c9c9c9;border-color:#d8d8d8;line-height:14px">...</div>
<div class="lbl r" style="left:377px;width:120px;top:420px"><span style="font-size:12.25px;letter-spacing:-0.361px;">Place</span></div>
<div class="inp" style="left:503px;top:415px;width:700px;height:20px;line-height:18px;"></div>
<div class="a" style="left:1279px;top:391px;width:90px;height:52px;background:#f0f0f0;border-top:1px solid #a0a6aa;border-bottom:1px solid #a0a6aa;box-shadow:inset 0 1px 0 #fff,inset 0 -1px 0 #fff"></div>
<svg class="a" style="left:1349px;top:394px" width="16" height="16" viewBox="0 0 16 16"><path d="M4.300 1.200l6.200-.9 2.700 5.200-7 1.600z" fill="#d9ebfb" stroke="#a9bdd0" stroke-width=".6"/><path d="M.7 8.300l3.200-2.600 2.300 1.500 6.500-1.500 2.600 2v3.400l-8.800 3.300-5.800-2.300z" fill="url(#gPrn)" stroke="#8f8f8f" stroke-width=".5"/><path d="M.7 8.400l5.800 2.300 8.800-3" stroke="#fdfdfd" stroke-width="1.100" fill="none"/><path d="M.9 12l5.600 2.300 8.700-3.300" stroke="#6e6e6e" stroke-width="1" fill="none"/><circle cx="13" cy="9.600" r=".8" fill="#35c435"/></svg>
<div class="inp" style="left:1270px;top:416px;width:27px;height:20px;line-height:18px;background:#f0f0f0;border-color:#a9adb0"></div>
<div class="inp" style="left:1298px;top:416px;width:80px;height:20px;line-height:18px;background:#f0f0f0;border-color:#a9adb0"></div>
<div class="a" style="left:497px;top:472px;width:880px;height:320px;border-left:1px solid #a8b0b6;border-top:1px solid #a8b0b6;background:#cfdde6"></div>
<div class="a" style="left:501px;top:474px;width:880px;height:98px;background:#b3ffb3"></div>
<div class="a" style="left:498px;top:572px;width:880px;height:98px;background:#c5d5de"></div>
<div class="a" style="left:498px;top:670px;width:880px;height:97px;background:#d4e3ee"></div>
<div class="a" style="left:426px;top:475px;width:71px;height:17px;background:#efefef;color:#000;text-align:center;line-height:21px;padding-left:2px"><span style="font-size:12px;letter-spacing:0.157px;">Notice</span></div>
<div class="a" style="left:424px;top:492px;width:75px;height:21px;background:#fff;color:#000;text-align:center;line-height:27px;padding-right:1px"><span style="font-size:12px;letter-spacing:-0.155px;">Resolutions</span></div>
<div class="inp" style="left:502px;top:476px;width:39px;height:20px;line-height:19px;text-align:center;padding:0;border-color:#a9a9b2;color:#666"><span style="font-size:12.25px;letter-spacing:0.974px;">38</span></div>
<div class="inp" style="left:545px;top:476px;width:550px;height:20px;line-height:19px;padding-left:1px;border-color:#a9a9b2;color:#555"><span style="font-size:12.25px;letter-spacing:-0.803px;word-spacing:1.7px;">HEADER RESOLUTION TRUST MEETING</span></div>
<div class="inp" style="left:502px;top:497px;width:593px;height:74px;border-color:#a9a9b2;padding:0"></div>
<div class="a" style="left:504.500px;top:499px;line-height:14px;color:#555;white-space:pre"><span style="font-size:10px;font-weight:bold;letter-spacing:0.16px">BOARD OF TRUSTESS OF %%client.name%%</span></div>
<div class="a" style="left:504.500px;top:513px;line-height:14px;color:#555;white-space:pre"><span style="font-size:10px;font-weight:bold;letter-spacing:0.16px">REGISTRATION NO.:  %%client.regno%%</span></div>
<div class="a" style="left:504.500px;top:555px;line-height:14px;color:#555;white-space:pre"><span style="font-size:10px;font-weight:bold;letter-spacing:0.16px">RESOLUTION</span></div>
<div class="inp" style="left:502px;top:574px;width:39px;height:20px;line-height:19px;text-align:center;padding:0;border-color:#a9b1b6;color:#666"><span style="font-size:12.25px;letter-spacing:0.974px;">39</span></div>
<div class="inp" style="left:545px;top:574px;width:550px;height:20px;line-height:19px;padding-left:1px;border-color:#a9b1b6;color:#555"><span style="font-size:12.25px;letter-spacing:-0.659px;word-spacing:1.7px;">RESOLUTION- TRUSTEE RESIGNATION</span></div>
<div class="inp" style="left:502px;top:595px;width:593px;height:74px;border-color:#a9b1b6;padding:0"></div>
<div class="a" style="left:504.500px;top:597px;line-height:14px;color:#555;white-space:pre"><span style="font-size:10px;letter-spacing:0.223px">&lt;BEGIN&gt;&lt;TRUSTEE_RES&gt;</span></div>
<div class="a" style="left:504.500px;top:636px;line-height:14px;color:#555;white-space:pre"><span style="font-size:10px;font-weight:bold;letter-spacing:0.16px">ACCEPTING THE RESIGNATION</span></div>
<div class="inp" style="left:502px;top:672px;width:39px;height:20px;line-height:19px;text-align:center;padding:0;border-color:#a9b1b6;color:#666"><span style="font-size:12.25px;letter-spacing:0.974px;">40</span></div>
<div class="inp" style="left:545px;top:672px;width:550px;height:20px;line-height:19px;padding-left:1px;border-color:#a9b1b6;color:#555"><span style="font-size:12.25px;letter-spacing:-0.779px;word-spacing:1.7px;">RESOLUTION FOOTER FOR TRUSTS</span></div>
<div class="inp" style="left:502px;top:693px;width:593px;height:74px;border-color:#a9b1b6;padding:0"></div>
<div class="a" style="left:504.500px;top:695px;line-height:14px;color:#555;white-space:pre"><span style="font-size:10px;letter-spacing:0.21px">&lt;BEGIN&gt;&lt;TRUSTEE_APP&gt;</span></div>
<div class="a" style="left:504.500px;top:708px;line-height:14px;color:#555;white-space:pre"><span style="font-size:10px;letter-spacing:0.041px">%%trustee.name_fs%%</span></div>
<div class="a" style="left:504.500px;top:721px;line-height:14px;color:#555;white-space:pre"><span style="font-size:10px;letter-spacing:-0.198px">&lt;END&gt;</span></div>
<!-- dialog -->
<div class="a" style="left:637px;top:234px;width:642px;height:510px;background:#f0f0f0;border:1px solid #4a4a4a;box-shadow:2px 4px 13px 0 rgba(0,0,0,.38)"></div>
<div class="a" style="left:638px;top:235px;width:640px;height:37px;background:#fff"></div>
<div class="a" style="left:649px;top:245px;width:16px;height:16px;background:#1c5873"></div>
<div class="a" style="left:650px;top:247px;width:14px;font-size:4px;line-height:5px;color:#bfe0ea;text-align:center;overflow:hidden;white-space:nowrap;letter-spacing:0">OWNL<br>GROUP</div>
<div class="a" style="left:672px;top:244px;color:#000;line-height:20px;white-space:nowrap"><span style="font-size:15.5px;letter-spacing:-0.399px;">Resolution Select</span></div>
<svg class="a" style="left:1250px;top:246px" width="14" height="14" viewBox="0 0 14 14"><path d="M.8 .8l12.400 12.400M13.200 .8L.8 13.200" stroke="#111" stroke-width="1"/></svg>
<svg class="a" style="left:833.5px;top:272.4px" width="21" height="21" viewBox="0 0 21 21"><circle cx="10.500" cy="10.500" r="9.900" fill="url(#gOk)" stroke="#0c7a16" stroke-width=".5"/><path d="M4.800 10.600l4 3.900 7-8" stroke="#fff" stroke-width="2.800" fill="none" stroke-linejoin="round"/></svg>
<svg class="a" style="left:878.5px;top:272.4px" width="21" height="21" viewBox="0 0 21 21"><circle cx="10.500" cy="10.500" r="9.900" fill="url(#gNo)" stroke="#b01004" stroke-width=".5"/><path d="M6.200 6.200l8.600 8.600M14.800 6.200l-8.600 8.600" stroke="#f4f4f4" stroke-width="2.800" fill="none"/></svg>
<div class="a" style="left:1072px;top:272px;width:110px;height:20px;background:#e1e1e1;border:1px solid #6a6a6a"></div>
<div class="a" style="left:1077px;top:275px;color:#000;line-height:16px;white-space:nowrap"><span style="font-size:13.5px;letter-spacing:0.858px;">Trust</span></div>
<svg class="a" style="left:1167px;top:279px" width="11" height="8" viewBox="0 0 11 8"><path d="M1 1.500l4.500 4.500 4.500-4.500" stroke="#333" stroke-width="1.100" fill="none"/></svg>
<div class="a" style="left:639px;top:297px;width:592px;height:29px;background:#e4ecf2"></div>
<div class="a" style="left:639px;top:297px;width:23px;height:29px;background:#fff;color:#000;text-align:center;line-height:32px;white-space:nowrap"><span style="font-size:12px;letter-spacing:-0.896px;">Sel</span></div>
<div class="a" style="left:664px;top:297px;width:408px;height:29px;background:#fff;color:#000;text-align:center;line-height:32px;white-space:nowrap"><span style="font-size:12px;letter-spacing:-0.106px;">Name</span></div>
<div class="a" style="left:1074px;top:297px;width:108px;height:29px;background:#fff;color:#000;text-align:center;line-height:32px;white-space:nowrap"><span style="font-size:12px;letter-spacing:-0.196px;">Type</span></div>
<div class="a" style="left:1184px;top:297px;width:46px;height:29px;background:#fff;color:#000;line-height:32px;padding-left:7px;white-space:nowrap"><span style="font-size:12px">S...</span></div>
<svg class="a" style="left:1214px;top:310px" width="7" height="5" viewBox="0 0 7 5"><path d="M0 4.500h7L3.500 .5z" fill="#111"/></svg>
<div class="a" style="left:639px;top:325px;width:592px;height:341px;background:#a6a9ab"></div>
<div class="c s" style="left:639px;top:327px;width:24px;height:18px"></div>
<div class="c s" style="left:665px;top:327px;width:408px;height:18px;line-height:19px"><span style="font-size:12.25px;letter-spacing:-0.842px;word-spacing:1.7px;">HEADER RESOLUTION DIRECTORS MEETING</span></div>
<div class="c s" style="left:1075px;top:327px;width:108px;height:18px;line-height:19px;padding-left:3px"></div>
<div class="c s" style="left:1185px;top:327px;width:45px;height:18px;line-height:19px"><span style="font-size:12.25px;letter-spacing:0.787px;">1</span></div>
<div class="cb" style="left:640px;top:328px"></div>
<div class="c e" style="left:639px;top:347px;width:24px;height:18px"></div>
<div class="c e" style="left:665px;top:347px;width:408px;height:18px;line-height:19px"><span style="font-size:12.25px;letter-spacing:-0.931px;word-spacing:1.7px;">HEADER RESOLUTION OF SHAREHOLDERS MEETING</span></div>
<div class="c e" style="left:1075px;top:347px;width:108px;height:18px;line-height:19px;padding-left:3px"></div>
<div class="c e" style="left:1185px;top:347px;width:45px;height:18px;line-height:19px"><span style="font-size:12.25px;letter-spacing:0.787px;">2</span></div>
<div class="cb" style="left:640px;top:348px"></div>
<div class="c o" style="left:639px;top:367px;width:24px;height:18px"></div>
<div class="c o" style="left:665px;top:367px;width:408px;height:18px;line-height:19px"><span style="font-size:12.25px;letter-spacing:-0.857px;word-spacing:1.7px;">HEADER RESOLUTION OF COMBINED MEETING</span></div>
<div class="c o" style="left:1075px;top:367px;width:108px;height:18px;line-height:19px;padding-left:3px"></div>
<div class="c o" style="left:1185px;top:367px;width:45px;height:18px;line-height:19px"><span style="font-size:12.25px;letter-spacing:0.787px;">3</span></div>
<div class="cb" style="left:640px;top:368px"></div>
<div class="c e" style="left:639px;top:387px;width:24px;height:18px"></div>
<div class="c e" style="left:665px;top:387px;width:408px;height:18px;line-height:19px"><span style="font-size:12.25px;letter-spacing:-0.83px;word-spacing:1.7px;">SPECIAL RESOLUTION - SHARE CONVERSION</span></div>
<div class="c e" style="left:1075px;top:387px;width:108px;height:18px;line-height:19px;padding-left:3px"></div>
<div class="c e" style="left:1185px;top:387px;width:45px;height:18px;line-height:19px"><span style="font-size:12.25px;letter-spacing:0.974px;">19</span></div>
<div class="cb" style="left:640px;top:388px"></div>
<div class="c o" style="left:639px;top:407px;width:24px;height:18px"></div>
<div class="c o" style="left:665px;top:407px;width:408px;height:18px;line-height:19px"><span style="font-size:12.25px;letter-spacing:-0.886px;word-spacing:1.7px;">RESOLUTION- SHARE INCREASE</span></div>
<div class="c o" style="left:1075px;top:407px;width:108px;height:18px;line-height:19px;padding-left:3px"></div>
<div class="c o" style="left:1185px;top:407px;width:45px;height:18px;line-height:19px"><span style="font-size:12.25px;letter-spacing:0.974px;">20</span></div>
<div class="cb" style="left:640px;top:408px"></div>
<div class="c e" style="left:639px;top:427px;width:24px;height:18px"></div>
<div class="c e" style="left:665px;top:427px;width:408px;height:18px;line-height:19px"><span style="font-size:12.25px;letter-spacing:-0.799px;word-spacing:1.7px;">SPECIAL RESOLUTION-CHANGE OF MOI</span></div>
<div class="c e" style="left:1075px;top:427px;width:108px;height:18px;line-height:19px;padding-left:3px"></div>
<div class="c e" style="left:1185px;top:427px;width:45px;height:18px;line-height:19px"><span style="font-size:12.25px;letter-spacing:0.974px;">25</span></div>
<div class="cb" style="left:640px;top:428px"></div>
<div class="c o" style="left:639px;top:447px;width:24px;height:18px"></div>
<div class="c o" style="left:665px;top:447px;width:408px;height:18px;line-height:19px"><span style="font-size:12.25px;letter-spacing:-0.94px;">QUORUM</span></div>
<div class="c o" style="left:1075px;top:447px;width:108px;height:18px;line-height:19px;padding-left:3px"></div>
<div class="c o" style="left:1185px;top:447px;width:45px;height:18px;line-height:19px"><span style="font-size:12.25px;letter-spacing:0.974px;">27</span></div>
<div class="cb" style="left:640px;top:448px"></div>
<div class="c e" style="left:639px;top:467px;width:24px;height:18px"></div>
<div class="c e" style="left:665px;top:467px;width:408px;height:18px;line-height:19px"><span style="font-size:12.25px;letter-spacing:-0.68px;word-spacing:1.7px;">SIGNING AND REPRESENTATION</span></div>
<div class="c e" style="left:1075px;top:467px;width:108px;height:18px;line-height:19px;padding-left:3px"></div>
<div class="c e" style="left:1185px;top:467px;width:45px;height:18px;line-height:19px"><span style="font-size:12.25px;letter-spacing:0.974px;">28</span></div>
<div class="cb" style="left:640px;top:468px"></div>
<div class="c o" style="left:639px;top:487px;width:24px;height:18px"></div>
<div class="c o" style="left:665px;top:487px;width:408px;height:18px;line-height:19px"><span style="font-size:12.25px;letter-spacing:-0.893px;word-spacing:1.7px;">NOTICE OF DIRECTORS MEETING - REG OFFICE CHANGE</span></div>
<div class="c o" style="left:1075px;top:487px;width:108px;height:18px;line-height:19px;padding-left:3px"></div>
<div class="c o" style="left:1185px;top:487px;width:45px;height:18px;line-height:19px"><span style="font-size:12.25px;letter-spacing:0.974px;">31</span></div>
<div class="cb" style="left:640px;top:488px"></div>
<div class="c e" style="left:639px;top:507px;width:24px;height:18px"></div>
<div class="c e" style="left:665px;top:507px;width:408px;height:18px;line-height:19px"><span style="font-size:12.25px;letter-spacing:-0.894px;">PROXIES</span></div>
<div class="c e" style="left:1075px;top:507px;width:108px;height:18px;line-height:19px;padding-left:3px"></div>
<div class="c e" style="left:1185px;top:507px;width:45px;height:18px;line-height:19px"><span style="font-size:12.25px;letter-spacing:0.974px;">31</span></div>
<div class="cb" style="left:640px;top:508px"></div>
<div class="c o" style="left:639px;top:527px;width:24px;height:18px"></div>
<div class="c o" style="left:665px;top:527px;width:408px;height:18px;line-height:19px"><span style="font-size:12.25px;letter-spacing:-0.761px;word-spacing:1.7px;">RESOLUTION FOOTER</span></div>
<div class="c o" style="left:1075px;top:527px;width:108px;height:18px;line-height:19px;padding-left:3px"></div>
<div class="c o" style="left:1185px;top:527px;width:45px;height:18px;line-height:19px"><span style="font-size:12.25px;letter-spacing:0.974px;">33</span></div>
<div class="cb" style="left:640px;top:528px"></div>
<div class="c e" style="left:639px;top:547px;width:24px;height:18px"></div>
<div class="c e" style="left:665px;top:547px;width:408px;height:18px;line-height:19px"><span style="font-size:12.25px;letter-spacing:-0.803px;word-spacing:1.7px;">HEADER RESOLUTION TRUST MEETING</span></div>
<div class="c e" style="left:1075px;top:547px;width:108px;height:18px;line-height:19px;padding-left:3px"><span style="font-size:12.25px;letter-spacing:0.363px;">Trust</span></div>
<div class="c e" style="left:1185px;top:547px;width:45px;height:18px;line-height:19px"><span style="font-size:12.25px;letter-spacing:0.974px;">38</span></div>
<div class="cb" style="left:640px;top:548px"></div>
<svg class="a" style="left:643px;top:552px" width="11" height="9" viewBox="0 0 11 9"><path d="M.8 4.500l3.200 3.200L10.200 1.200" stroke="#222" stroke-width="1.200" fill="none"/></svg>
<div class="c o" style="left:639px;top:567px;width:24px;height:18px"></div>
<div class="c o" style="left:665px;top:567px;width:408px;height:18px;line-height:19px"><span style="font-size:12.25px;letter-spacing:-0.659px;word-spacing:1.7px;">RESOLUTION- TRUSTEE RESIGNATION</span></div>
<div class="c o" style="left:1075px;top:567px;width:108px;height:18px;line-height:19px;padding-left:3px"><span style="font-size:12.25px;letter-spacing:0.363px;">Trust</span></div>
<div class="c o" style="left:1185px;top:567px;width:45px;height:18px;line-height:19px"><span style="font-size:12.25px;letter-spacing:0.974px;">39</span></div>
<div class="cb" style="left:640px;top:568px"></div>
<svg class="a" style="left:643px;top:572px" width="11" height="9" viewBox="0 0 11 9"><path d="M.8 4.500l3.200 3.200L10.200 1.200" stroke="#222" stroke-width="1.200" fill="none"/></svg>
<div class="c e" style="left:639px;top:587px;width:24px;height:18px"></div>
<div class="c e" style="left:665px;top:587px;width:408px;height:18px;line-height:19px"><span style="font-size:12.25px;letter-spacing:-0.779px;word-spacing:1.7px;">RESOLUTION FOOTER FOR TRUSTS</span></div>
<div class="c e" style="left:1075px;top:587px;width:108px;height:18px;line-height:19px;padding-left:3px"><span style="font-size:12.25px;letter-spacing:0.363px;">Trust</span></div>
<div class="c e" style="left:1185px;top:587px;width:45px;height:18px;line-height:19px"><span style="font-size:12.25px;letter-spacing:0.974px;">40</span></div>
<div class="cb" style="left:640px;top:588px"></div>
<svg class="a" style="left:643px;top:592px" width="11" height="9" viewBox="0 0 11 9"><path d="M.8 4.500l3.200 3.200L10.200 1.200" stroke="#222" stroke-width="1.200" fill="none"/></svg>
<div class="c o" style="left:639px;top:607px;width:24px;height:18px"></div>
<div class="c o" style="left:665px;top:607px;width:408px;height:18px;line-height:19px"><span style="font-size:12.25px;letter-spacing:-0.971px;word-spacing:1.7px;">SHAREHOLDERS ATTENDANCE REGISTER</span></div>
<div class="c o" style="left:1075px;top:607px;width:108px;height:18px;line-height:19px;padding-left:3px"></div>
<div class="c o" style="left:1185px;top:607px;width:45px;height:18px;line-height:19px"><span style="font-size:12.25px;letter-spacing:0.974px;">99</span></div>
<div class="cb" style="left:640px;top:608px"></div>
<div class="c e" style="left:639px;top:627px;width:24px;height:18px"></div>
<div class="c e" style="left:665px;top:627px;width:408px;height:18px;line-height:19px"><span style="font-size:12.25px;letter-spacing:-0.861px;word-spacing:1.7px;">DIRECTORS ATTENDANCE REGISTER</span></div>
<div class="c e" style="left:1075px;top:627px;width:108px;height:18px;line-height:19px;padding-left:3px"></div>
<div class="c e" style="left:1185px;top:627px;width:45px;height:18px;line-height:19px"><span style="font-size:12.25px;letter-spacing:0.974px;">99</span></div>
<div class="cb" style="left:640px;top:628px"></div>
<div class="c o" style="left:639px;top:647px;width:24px;height:18px"></div>
<div class="c o" style="left:665px;top:647px;width:408px;height:18px;line-height:19px"><span style="font-size:12.25px;letter-spacing:-0.829px;word-spacing:1.7px;">MINUTES OF SHARE ALLOTMENTS</span></div>
<div class="c o" style="left:1075px;top:647px;width:108px;height:18px;line-height:19px;padding-left:3px"></div>
<div class="c o" style="left:1185px;top:647px;width:45px;height:18px;line-height:19px"><span style="font-size:12.25px;letter-spacing:0.581px;">204</span></div>
<div class="cb" style="left:640px;top:648px"></div>
</body></html>
